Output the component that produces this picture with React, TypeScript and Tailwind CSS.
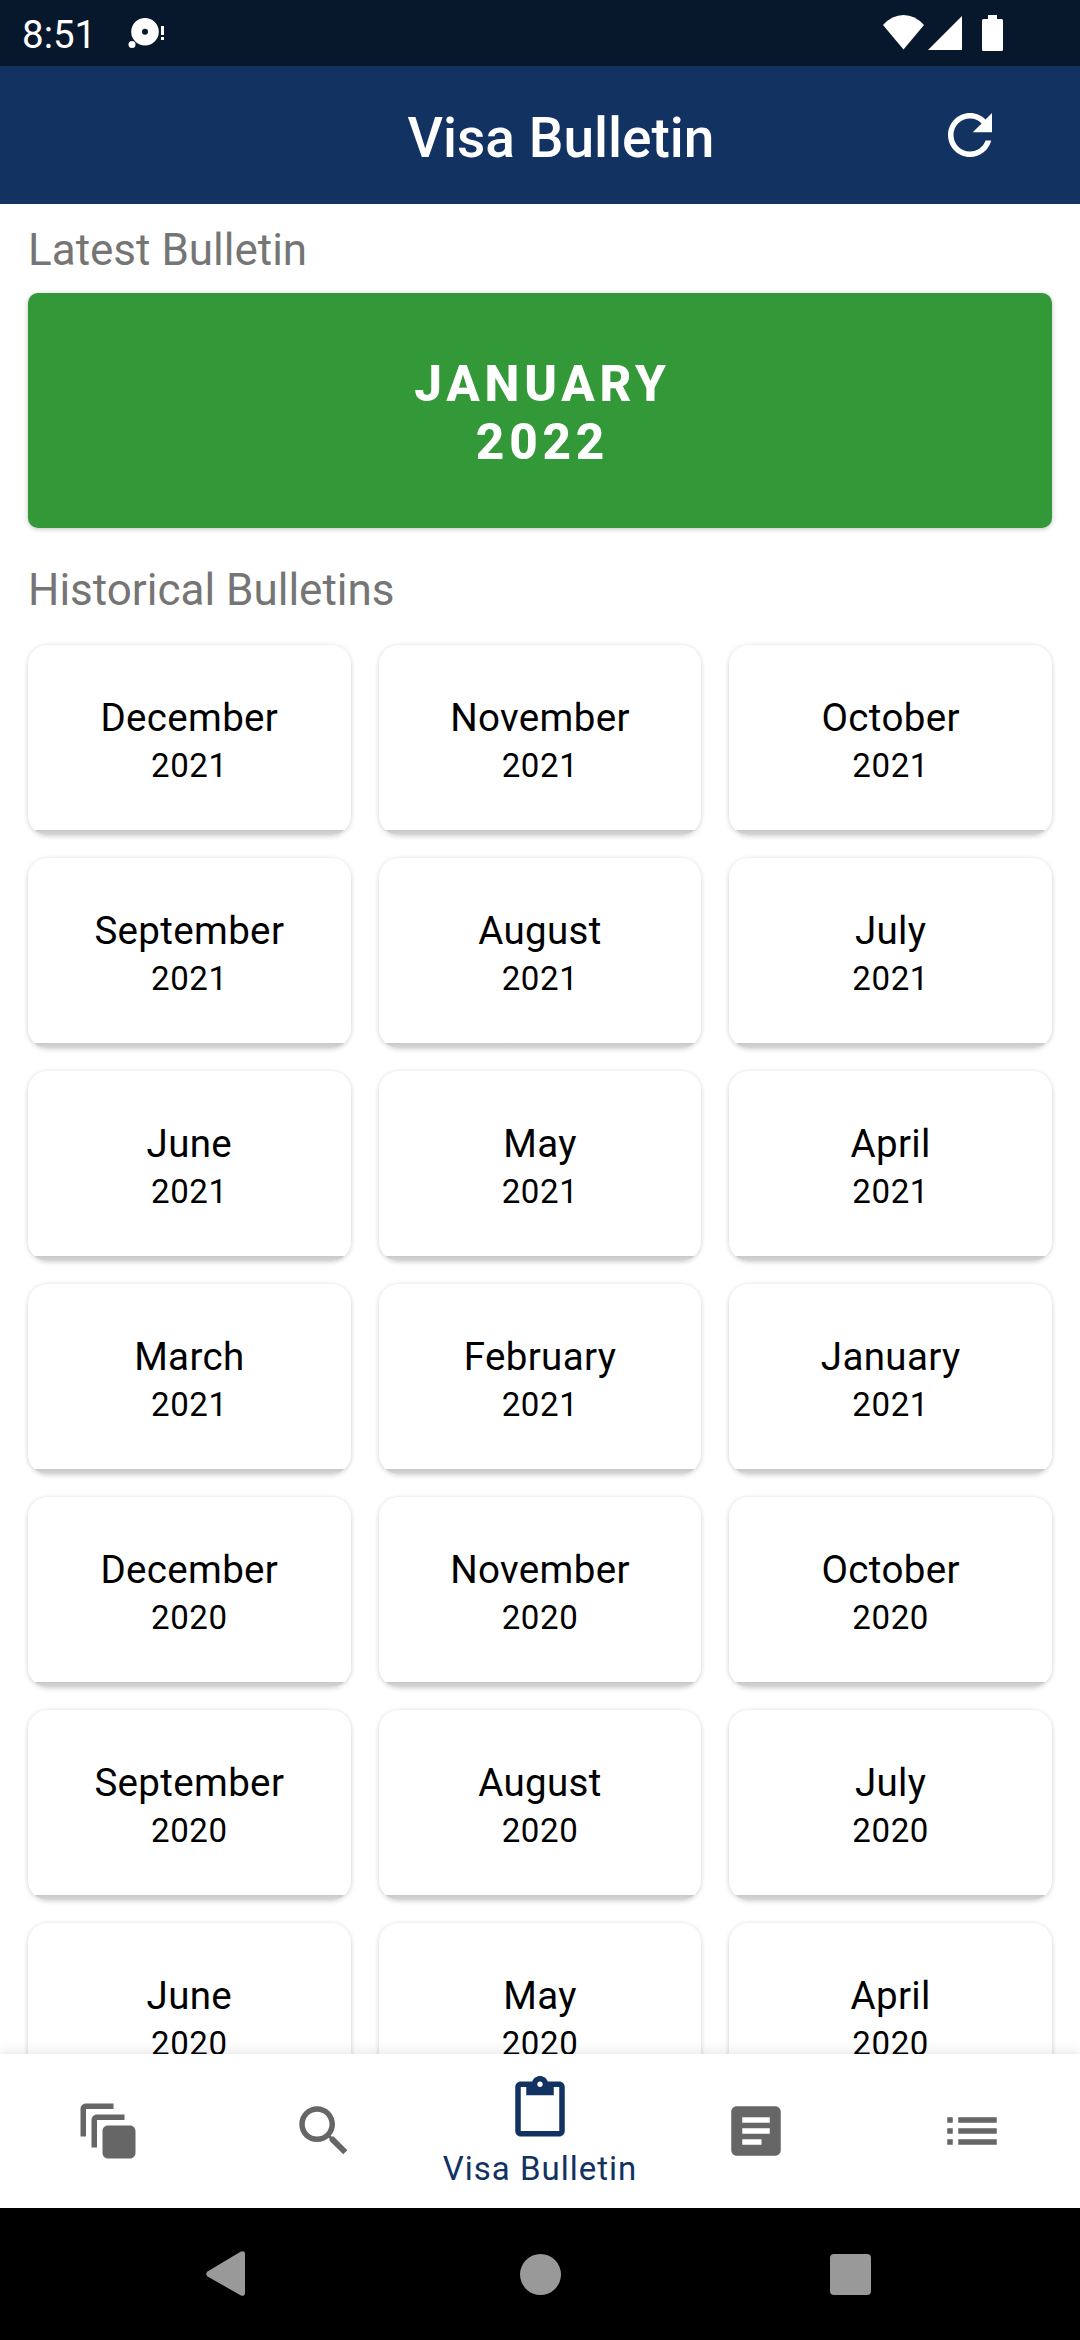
import { clsx } from "clsx";

type Bulletin = {
    month: string;
    year: number;
};

const bulletins: Bulletin[] = [
    { month: "December", year: 2021 },
    { month: "November", year: 2021 },
    { month: "October", year: 2021 },
    { month: "September", year: 2021 },
    { month: "August", year: 2021 },
    { month: "July", year: 2021 },
    { month: "June", year: 2021 },
    { month: "May", year: 2021 },
    { month: "April", year: 2021 },
    { month: "March", year: 2021 },
    { month: "February", year: 2021 },
    { month: "January", year: 2021 },
    { month: "December", year: 2020 },
    { month: "November", year: 2020 },
    { month: "October", year: 2020 },
    { month: "September", year: 2020 },
    { month: "August", year: 2020 },
    { month: "July", year: 2020 },
    { month: "June", year: 2020 },
    { month: "May", year: 2020 },
    { month: "April", year: 2020 },
];

const icons = {
    refresh:
        "M17.65 6.35C16.2 4.9 14.21 4 12 4c-4.42 0-7.99 3.58-7.99 8s3.57 8 7.99 8c3.73 0 6.84-2.55 7.73-6h-2.08c-.82 2.33-3.04 4-5.65 4-3.31 0-6-2.69-6-6s2.69-6 6-6c1.66 0 3.14.69 4.22 1.78L13 11h7V4l-2.35 2.35z",
    cases: "M14 2H4c-1.11 0-2 .9-2 2v10h2V4h10V2zm4 4H8c-1.11 0-2 .9-2 2v10h2V8h10V6zm2 4h-8c-1.11 0-2 .9-2 2v8c0 1.1.9 2 2 2h8c1.1 0 2-.9 2-2v-8c0-1.1-.9-2-2-2z",
    search: "M15.5 14h-.79l-.28-.27C15.41 12.59 16 11.11 16 9.5 16 5.91 13.09 3 9.5 3S3 5.91 3 9.5 5.91 16 9.5 16c1.61 0 3.09-.59 4.23-1.57l.27.28v.79l5 4.99L20.49 19l-4.99-5zm-6 0C7.01 14 5 11.99 5 9.5S7.01 5 9.5 5 14 7.01 14 9.5 11.99 14 9.5 14z",
    bulletin:
        "M19 2h-4.18C14.4.84 13.3 0 12 0c-1.3 0-2.4.84-2.82 2H5c-1.1 0-2 .9-2 2v16c0 1.1.9 2 2 2h14c1.1 0 2-.9 2-2V4c0-1.1-.9-2-2-2zm-7 0c.55 0 1 .45 1 1s-.45 1-1 1-1-.45-1-1 .45-1 1-1zm7 18H5V4h2v3h10V4h2v16z",
    news: "M19 3H5c-1.1 0-2 .9-2 2v14c0 1.1.9 2 2 2h14c1.1 0 2-.9 2-2V5c0-1.1-.9-2-2-2zm-5 14H7v-2h7v2zm3-4H7v-2h10v2zm0-4H7V7h10v2z",
    more: "M3 13h2v-2H3v2zm0 4h2v-2H3v2zm0-8h2V7H3v2zm4 4h14v-2H7v2zm0 4h14v-2H7v2zM7 7v2h14V7H7z",
};

const tabs: { name: string; icon: string; active?: boolean }[] = [
    { name: "Cases", icon: icons.cases },
    { name: "Search", icon: icons.search },
    { name: "Visa Bulletin", icon: icons.bulletin, active: true },
    { name: "News", icon: icons.news },
    { name: "More", icon: icons.more },
];

function Icon({ path }: { path: string }) {
    return (
        <svg viewBox="0 0 24 24" className="size-[66px] shrink-0 fill-current">
            <path d={path} />
        </svg>
    );
}

function StatusBar() {
    return (
        <div className="flex h-[66px] shrink-0 items-center bg-[#07172c] pl-[22px] text-white">
            <span className="w-[106px] text-[38.5px] leading-[45px] pt-0.5">8:51</span>
            <svg viewBox="0 0 37 32" className="h-8 w-[37px] fill-current">
                <path
                    fillRule="evenodd"
                    d="M17 1a13.8 13.8 0 1 1 0 27.6a13.8 13.8 0 1 1 0-27.6zm0 10.800a3 3 0 1 0 0 6a3 3 0 1 0 0-6z"
                />
                <circle cx="4" cy="27.500" r="3.500" />
                <path d="M33 9h3v9h-3zM33 20h3v3h-3z" />
            </svg>
            <div className="ml-auto flex items-start pr-[77px]">
                <svg viewBox="0 0 120 36" className="h-9 w-[120px] fill-current">
                    <path d="M0 10Q9 0 20.500 0Q32 0 41 10L20.500 34.500z" />
                    <path d="M45 35L79 1V35z" />
                    <path d="M105 0h9v4h4.500q1.500 0 1.500 1.500v29q0 1.500-1.500 1.500h-18q-1.500 0-1.500-1.500v-29q0-1.500 1.500-1.500h4.500z" />
                </svg>
            </div>
        </div>
    );
}

function Header() {
    return (
        <header className="grid h-[138px] shrink-0 grid-cols-[1fr_auto_1fr] items-center bg-[#123262] pl-[42px] text-white">
            <h1 className="col-start-2 pt-1.5 text-[55px] leading-[64px] font-medium">Visa Bulletin</h1>
            <button className="mr-[77px] justify-self-end">
                <Icon path={icons.refresh} />
            </button>
        </header>
    );
}

function BulletinCard({ month, year }: Bulletin) {
    return (
        <div className="-mb-[5px] flex h-[190px] flex-col items-center rounded-[20px] bg-[linear-gradient(to_bottom,#fff_185px,#c8c8c8_185px,#d8d8d8_190px)] pt-[50px] text-black shadow-[0_1px_5px_rgba(0,0,0,0.2)]">
            <span className="text-[38.5px] leading-[46px] tracking-[0.35px]">{month}</span>
            <span className="text-[33px] leading-[50px] tracking-[0.6px]">{year}</span>
        </div>
    );
}

function TabBar() {
    return (
        <nav className="relative grid h-[154px] shrink-0 grid-cols-5 bg-white shadow-[0_-2px_12px_rgba(0,0,0,0.1)]">
            {tabs.map((tab) => (
                <button
                    key={tab.name}
                    aria-label={tab.name}
                    className={clsx(
                        "flex flex-col items-center",
                        tab.active ? "justify-start pt-[22px] text-[#123262]" : "justify-center text-[#666666]"
                    )}
                >
                    <Icon path={tab.icon} />
                    {tab.active && (
                        <span className="text-[33px] leading-[54px] tracking-[1px] whitespace-nowrap">{tab.name}</span>
                    )}
                </button>
            ))}
        </nav>
    );
}

function SystemNav() {
    return (
        <div className="flex h-[132px] shrink-0 items-center justify-between bg-black pr-[209px] pl-[206px] text-[#999999]">
            <svg viewBox="0 0 40 46" className="h-[46px] w-10 fill-current">
                <path d="M1.500 20.500L34.500 .8Q39 -1 39 3V42Q39 46 34.500 44.200L1.500 25.500Q-1 23 1.500 20.500z" />
            </svg>
            <div className="ml-1 size-[41px] rounded-full bg-current" />
            <div className="size-[41px] rounded-[4px] bg-current" />
        </div>
    );
}

export default function App() {
    return (
        <div className="flex h-[2340px] w-[1080px] flex-col overflow-hidden bg-white font-[Roboto,sans-serif]">
            <StatusBar />
            <Header />
            <main className="min-h-0 flex-1 overflow-hidden px-7">
                <h2 className="pt-5 text-[44px] leading-[52px] text-[#757575]">Latest Bulletin</h2>
                <div className="mt-[17px] flex h-[235px] flex-col items-center justify-center rounded-[10px] bg-[#339837] pt-1 pl-[5px] text-[49.5px] leading-[58px] font-extrabold tracking-[4.8px] text-white shadow-[0_1px_5px_rgba(0,0,0,0.25)]">
                    <span>JANUARY</span>
                    <span>2022</span>
                </div>
                <h2 className="mt-9 text-[44px] leading-[52px] text-[#757575]">Historical Bulletins</h2>
                <div className="mt-[29px] grid grid-cols-3 gap-7">
                    {bulletins.map((b) => (
                        <BulletinCard key={`${b.month}-${b.year}`} {...b} />
                    ))}
                </div>
            </main>
            <TabBar />
            <SystemNav />
        </div>
    );
}
